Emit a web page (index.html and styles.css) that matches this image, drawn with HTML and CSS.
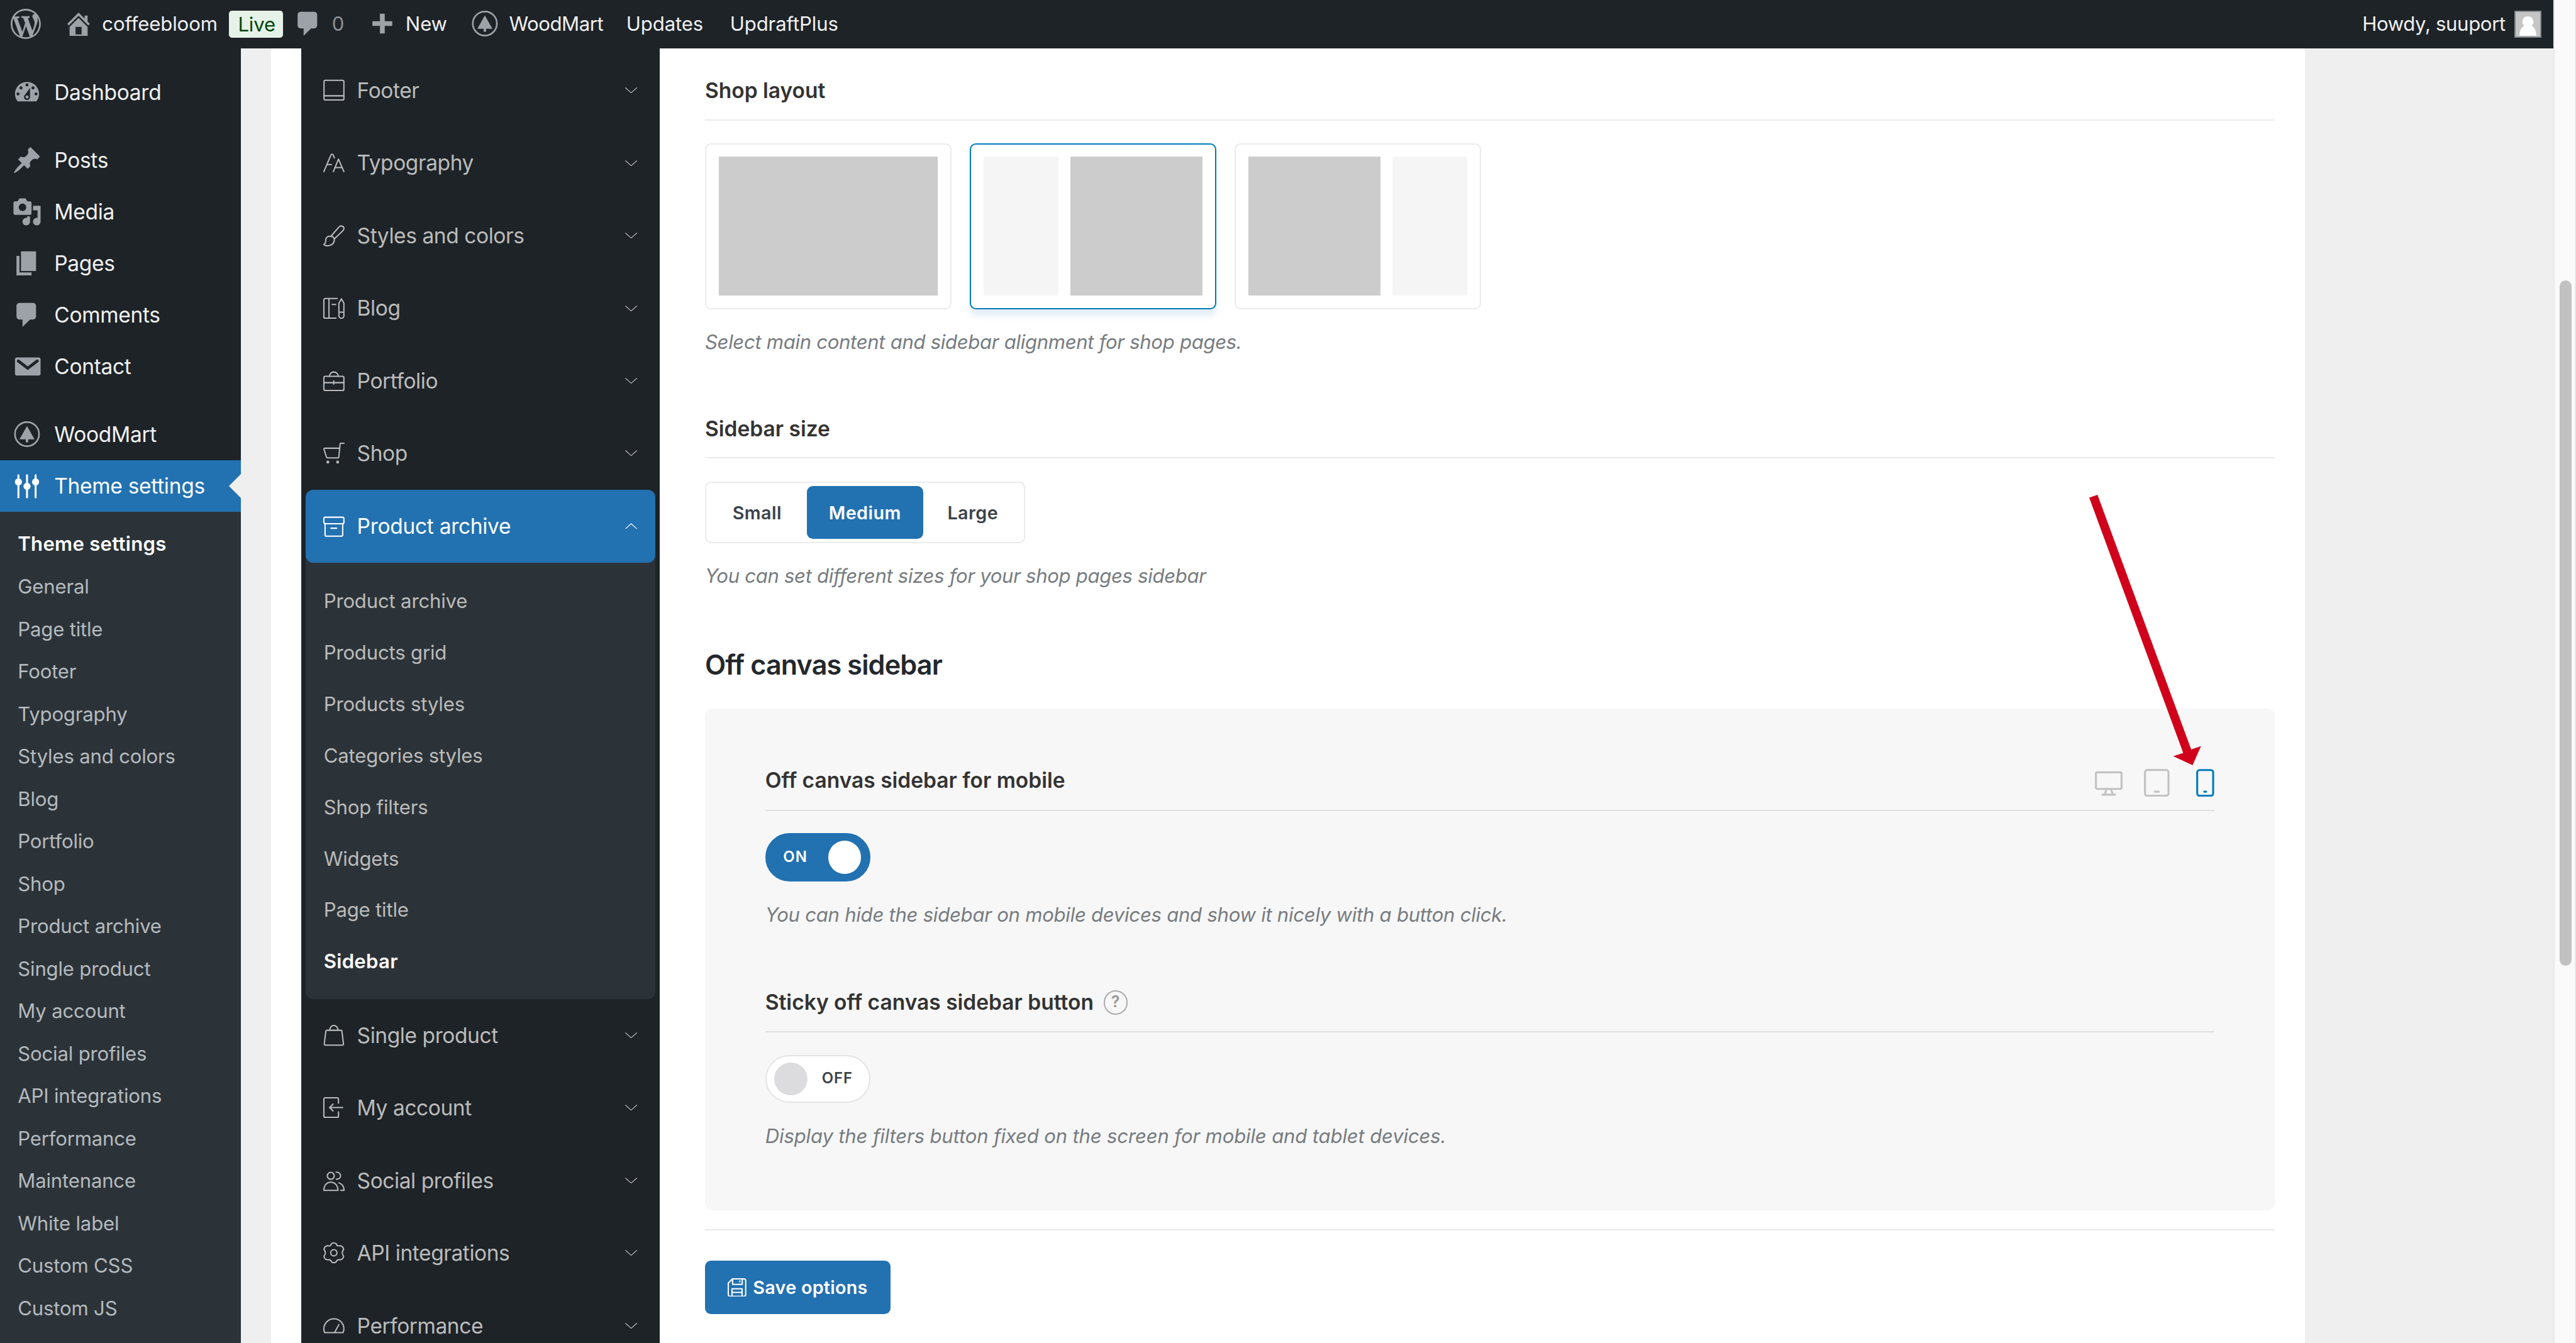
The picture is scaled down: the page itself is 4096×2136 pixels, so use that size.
FILE: index.html
```html
<!DOCTYPE html>
<html lang="en">
<head>
<meta charset="utf-8">
<title>Theme settings ‹ coffeebloom — WordPress</title>
<link rel="stylesheet" href="styles.css">
</head>
<body>
<svg class="defs" aria-hidden="true">
  <symbol id="chevron" viewBox="0 0 8 4"><path d="M.3.3 4 3.6 7.7.3"/></symbol>
  <symbol id="tree" viewBox="0 0 20 20"><circle cx="10" cy="9.8" r="8" fill="none" stroke="currentColor" stroke-width="1.1"/><path d="M10 4.4 15 13.3h-4.2v1.9H9.2v-1.9H5z"/></symbol>
  <symbol id="comment" viewBox="0 0 20 20"><path d="M5 2h9c1.1 0 2 .9 2 2v7c0 1.1-.9 2-2 2h-2l-5 5v-5H5c-1.1 0-2-.9-2-2V4c0-1.1.9-2 2-2z"/></symbol>
</svg>

<div class="window">
  <div class="page">
    <header class="adminbar">
      <a class="bar-logo"><svg class="dash" viewBox="0 0 20 20"><path d="M20 10c0-5.51-4.49-10-10-10C4.48 0 0 4.49 0 10c0 5.52 4.48 10 10 10 5.51 0 10-4.48 10-10zM7.78 15.37L4.37 6.22c.55-.02 1.17-.08 1.17-.08.5-.06.44-1.13-.06-1.11 0 0-1.45.11-2.37.11-.18 0-.37 0-.58-.01C4.12 2.69 6.87 1.11 10 1.11c2.33 0 4.45.87 6.05 2.34-.68-.11-1.65.39-1.65 1.58 0 .74.45 1.36.9 2.1.35.61.55 1.36.55 2.46 0 1.49-1.4 5-1.4 5l-3.03-8.37c.54-.02.82-.17.82-.17.5-.05.44-1.25-.06-1.22 0 0-1.44.12-2.38.12-.87 0-2.33-.12-2.33-.12-.5-.03-.56 1.2-.06 1.22l.92.08 1.26 3.41zM17.41 10c.24-.64.74-1.87.43-4.25.7 1.29 1.05 2.71 1.05 4.25 0 3.29-1.73 6.24-4.4 7.78.97-2.59 1.94-5.2 2.92-7.78zM6.1 18.09C3.12 16.65 1.11 13.53 1.11 10c0-1.3.23-2.48.72-3.59C3.25 10.3 4.67 14.2 6.1 18.09zm4.03-6.63l2.58 6.98c-.86.29-1.76.45-2.71.45-.79 0-1.57-.11-2.29-.33.81-2.38 1.62-4.74 2.42-7.1z"/></svg></a>
      <a class="bar-site"><svg class="dash" viewBox="0 0 20 20"><path d="M16 8.5l1.53 1.53-1.06 1.06L10 4.6l-6.47 6.49-1.06-1.06L10 2.5l4 4v-2h2v4zm-6-2.46l6 5.99V18H4v-5.97zM12 17v-5H8v5h4z"/></svg><span>coffeebloom</span><b class="badge">Live</b></a>
      <a class="bar-comments"><svg class="dash"><use href="#comment"/></svg><span>0</span></a>
      <a class="bar-new"><svg class="dash" viewBox="0 0 20 20"><path d="M16.6 8.2v3.2h-5v5H8.4v-5h-5V8.2h5v-5h3.2v5z"/></svg><span>New</span></a>
      <a class="bar-wood"><svg class="dash"><use href="#tree"/></svg><span>WoodMart</span></a>
      <a class="bar-updates">Updates</a>
      <a class="bar-updraft">UpdraftPlus</a>
      <a class="bar-user"><span>Howdy, suuport</span><svg class="avatar" viewBox="0 0 16 16"><path fill="#c5c5c5" d="M0 0h16v16H0z"/><path fill="#fff" d="M8 3a3.3 3.3 0 0 1 2.300 5.900c2 1 3 3.200 3.200 6.500h-11c.2-3.300 1.200-5.500 3.200-6.500A3.300 3.300 0 0 1 8 3z"/></svg></a>
    </header>

    <div class="columns">
      <nav class="adminmenu">
        <a class="item"><svg class="dash" viewBox="0 0 20 20"><path d="M3.76 16h12.480c1.100-1.370 1.760-3.110 1.760-5 0-4.420-3.580-8-8-8s-8 3.580-8 8c0 1.890.66 3.630 1.760 5zM10 4c.55 0 1 .45 1 1s-.45 1-1 1-1-.45-1-1 .45-1 1-1zM6 6c.55 0 1 .45 1 1s-.45 1-1 1-1-.45-1-1 .45-1 1-1zm8 0c.55 0 1 .45 1 1s-.45 1-1 1-1-.45-1-1 .45-1 1-1zm-5.370 5.550L12 7v6c0 1.100-.9 2-2 2s-2-.9-2-2c0-.57.24-1.080.63-1.450zM4 10c.55 0 1 .45 1 1s-.45 1-1 1-1-.45-1-1 .45-1 1-1zm12 0c.55 0 1 .45 1 1s-.45 1-1 1-1-.45-1-1 .45-1 1-1zm-5 3c0-.55-.45-1-1-1s-1 .45-1 1 .45 1 1 1 1-.45 1-1z"/></svg>Dashboard</a>
        <a class="item gap-above"><svg class="dash" viewBox="0 0 20 20"><path d="M10.440 3.020l1.820-1.820 6.360 6.350-1.830 1.820c-1.050-.68-2.480-.57-3.410.36l-.75.75c-.92.93-1.040 2.350-.35 3.410l-1.830 1.820-2.410-2.410-2.800 2.790c-.42.42-3.380 2.710-3.800 2.290s1.860-3.390 2.280-3.810l2.790-2.790L4.100 9.360l1.830-1.820c1.050.69 2.480.57 3.400-.36l.75-.75c.93-.92 1.050-2.350.36-3.410z"/></svg>Posts</a>
        <a class="item"><svg class="dash" viewBox="0 0 20 20"><path d="M13 11V4c0-.55-.45-1-1-1h-1.670L9 1H5L3.670 3H2c-.55 0-1 .45-1 1v7c0 .55.45 1 1 1h10c.55 0 1-.45 1-1zM7 4.500c1.380 0 2.500 1.120 2.500 2.500S8.380 9.500 7 9.500 4.500 8.380 4.500 7 5.620 4.500 7 4.500zM14 6h5v10.500c0 1.380-1.120 2.500-2.500 2.500S14 17.880 14 16.500s1.120-2.500 2.500-2.500c.17 0 .34.02.5.05V9h-3V6zm-4 8.050V13h2v3.500c0 1.380-1.120 2.500-2.500 2.500S7 17.880 7 16.500 8.120 14 9.500 14c.17 0 .34.02.5.05z"/></svg>Media</a>
        <a class="item"><svg class="dash" viewBox="0 0 20 20"><path d="M6 15V2h10v13H6zm-1 1h8v2H3V5h2v11z"/></svg>Pages</a>
        <a class="item"><svg class="dash"><use href="#comment"/></svg>Comments</a>
        <a class="item"><svg class="dash" viewBox="0 0 20 20"><rect x="2" y="4" width="17" height="12" rx="1.400"/><path d="M4.200 6.300 10.500 11.100l6.300-4.800" fill="none" stroke="#1d2327" stroke-width="1.900" stroke-linecap="round"/></svg>Contact</a>
        <a class="item gap-above"><svg class="dash"><use href="#tree"/></svg>WoodMart</a>
        <a class="item current"><svg class="dash" viewBox="0 0 20 20"><path d="M4.300 2.800v14.700M10 2.800v14.700M15.700 2.800v14.700" fill="none" stroke="currentColor" stroke-width="1.300" stroke-linecap="round"/><circle cx="4.300" cy="7.300" r="2.350"/><circle cx="10" cy="10.200" r="2.350"/><circle cx="15.700" cy="7.300" r="2.350"/></svg>Theme settings</a>
        <div class="submenu">
          <a class="active">Theme settings</a><a>General</a><a>Page title</a><a>Footer</a><a>Typography</a><a>Styles and colors</a><a>Blog</a><a>Portfolio</a><a>Shop</a><a>Product archive</a><a>Single product</a><a>My account</a><a>Social profiles</a><a>API integrations</a><a>Performance</a><a>Maintenance</a><a>White label</a><a>Custom CSS</a><a>Custom JS</a><a>Other</a>
        </div>
      </nav>

      <div class="settings">
        <nav class="sections">
          <a class="section"><svg class="ico" viewBox="0 0 14 14"><rect x=".5" y=".3" width="13.200" height="13.100" rx=".9"/><path d="M.5 10.600h13.200"/></svg><span>Footer</span><svg class="chev"><use href="#chevron"/></svg></a>
          <a class="section"><svg class="ico" viewBox="0 0 14 14"><path d="M.4 12.500 5 1.700C5.400.7 6.300.7 6.700 1.700l.7 1.700M2.900 7.800h2.500M6.700 12.500l3.400-8.300 3.600 8.300M7.900 9.800h4.500"/></svg><span>Typography</span><svg class="chev"><use href="#chevron"/></svg></a>
          <a class="section"><svg class="ico" viewBox="0 0 14 14"><path d="M5 7.500 10.500 1.200C11.600 0 14 .7 13.700 2.500c-.1.500-.3.900-.8 1.300L7.300 9.300M5 7.500C2.900 7.100 1.700 8.300 1.700 9.800c0 1.600-.3 2.500-1.300 3.100 1.600 1.500 7.300 1.100 6.900-3.600C7.100 8.300 6.200 7.500 5 7.500z"/></svg><span>Styles and colors</span><svg class="chev"><use href="#chevron"/></svg></a>
          <a class="section"><svg class="ico" viewBox="0 0 14 14"><path d="M9.300.3H1.300a.9.900 0 0 0-.9.900v11.300a.9.900 0 0 0 .9.900h7.200M3.800.3v13.100M5.900 4.300h2.400M12.100.5 10.400 3.400v8.400a1.650 1.650 0 0 0 3.300 0V3.400zM10.400 9.400h3.300"/></svg><span>Blog</span><svg class="chev"><use href="#chevron"/></svg></a>
          <a class="section"><svg class="ico" viewBox="0 0 14 14"><rect x=".4" y="4" width="13.300" height="9.400" rx=".9"/><path d="M.4 8.200h13.300M7 7v2.200M4 4C4.300 2.300 5.500 1.100 7 1.100S9.800 2.300 10.100 4"/></svg><span>Portfolio</span><svg class="chev"><use href="#chevron"/></svg></a>
          <a class="section"><svg class="ico" viewBox="0 0 14 14"><path d="M13.800.4h-2.100a.5.500 0 0 0-.5.500l-.9 8.700a.6.600 0 0 1-.6.500H2.800a.8.800 0 0 1-.7-.6L.5 4.500a.6.600 0 0 1 .6-.8H10.900"/><g fill="currentColor" stroke="none"><circle cx="3.050" cy="12.900" r=".95"/><circle cx="9.550" cy="12.900" r=".95"/></g></svg><span>Shop</span><svg class="chev"><use href="#chevron"/></svg></a>
          <div class="group">
            <a class="section open"><svg class="ico" viewBox="0 0 14 14"><rect x=".4" y="1.100" width="13.300" height="4.300" rx=".9"/><path d="M1.200 5.400v7.300a1 1 0 0 0 1 1h9.700a1 1 0 0 0 1-1V5.400M5.100 8.400h3.800"/></svg><span>Product archive</span><svg class="chev up"><use href="#chevron"/></svg></a>
            <div class="children"><a>Product archive</a><a>Products grid</a><a>Products styles</a><a>Categories styles</a><a>Shop filters</a><a>Widgets</a><a>Page title</a><a class="active">Sidebar</a></div>
          </div>
          <a class="section"><svg class="ico" viewBox="0 0 14 14"><path d="M2.500 3.600h9.100a.8.800 0 0 1 .8.600l1 8.400a.7.700 0 0 1-.7.900H1.400a.7.700 0 0 1-.7-.9l1-8.400a.8.800 0 0 1 .8-.6zM4.300 3.600C4.500 1.500 5.500.4 7 .4s2.600 1.100 2.800 3.200"/></svg><span>Single product</span><svg class="chev"><use href="#chevron"/></svg></a>
          <a class="section"><svg class="ico" viewBox="0 0 14 14"><path d="M10.100 4V1.300a.9.900 0 0 0-.9-.9H1.300a.9.900 0 0 0-.9.900v11.200a.9.900 0 0 0 .9.900h7.900a.9.900 0 0 0 .9-.9V9.800M12.900 6.900H4.200M6.500 4.600 4.200 6.900l2.300 2.300"/></svg><span>My account</span><svg class="chev"><use href="#chevron"/></svg></a>
          <a class="section"><svg class="ico" viewBox="0 0 14 14"><circle cx="5" cy="3.800" r="2.300"/><path d="M8.500 1.400c4-.1 4 4.700.2 4.700M.4 13.500c0-3.200 1.800-5.500 4.600-5.500s4.700 2.300 4.800 5.500zM10.400 8.500c2.200.7 3.400 2.600 3.400 5h-2.200"/></svg><span>Social profiles</span><svg class="chev"><use href="#chevron"/></svg></a>
          <a class="section"><svg class="ico" viewBox="0 0 14 14"><circle cx="7" cy="6.900" r="2.100"/><path d="M5.400.9Q7-.3 8.600.9Q9 2.700 11.500 2.200Q13.400 2.900 13.500 4.700Q11.700 6.900 13.500 9.100Q13.400 10.900 11.500 11.600Q9 11.100 8.600 12.900Q7 14.100 5.400 12.900Q5 11.100 2.500 11.600Q.6 10.900.5 9.100Q2.300 6.900.5 4.700Q.6 2.900 2.500 2.200Q5 2.700 5.400.9z"/></svg><span>API integrations</span><svg class="chev"><use href="#chevron"/></svg></a>
          <a class="section"><svg class="ico" viewBox="0 0 14 14"><path d="M1 11.500C.6 10.700.4 9.800.4 9c0-3.700 3-6.700 6.700-6.700s6.600 3 6.600 6.700c0 .8-.2 1.700-.6 2.500zM10.400 6.100 7.600 11.300"/></svg><span>Performance</span><svg class="chev"><use href="#chevron"/></svg></a>
        </nav>

        <main class="content">
          <section class="field">
            <h4>Shop layout</h4>
            <div class="layouts">
              <div class="layout"><i class="dark"></i></div>
              <div class="layout chosen"><i class="light"></i><i class="dark"></i></div>
              <div class="layout"><i class="dark"></i><i class="light"></i></div>
            </div>
            <p class="desc">Select main content and sidebar alignment for shop pages.</p>
          </section>
          <section class="field size-field">
            <h4>Sidebar size</h4>
            <div class="buttons"><span>Small</span><span class="on">Medium</span><span>Large</span></div>
            <p class="desc">You can set different sizes for your shop pages sidebar</p>
          </section>
          <h3>Off canvas sidebar</h3>
          <div class="panel">
            <section class="field">
              <h4>Off canvas sidebar for mobile
                <span class="devices">
                  <svg class="monitor" viewBox="0 0 18.400 17"><rect x=".7" y="1" width="17" height="11" rx=".8"/><path d="M7.700 12 6.600 15.500M10.700 12l1.100 3.500M5 15.800h8.400"/></svg>
                  <svg class="tablet" viewBox="0 0 17 18.500"><rect x=".7" y=".7" width="15.600" height="17.100" rx="1.500"/><path d="M7.200 15.100h2.600"/></svg>
                  <svg class="phone" viewBox="0 0 12 18.500"><rect x=".7" y=".7" width="10.600" height="17.100" rx="1.500"/><path d="M5.400 15.100h1.200"/></svg>
                </span>
              </h4>
              <div class="toggle is-on"><span>ON</span><i></i></div>
              <p class="desc">You can hide the sidebar on mobile devices and show it nicely with a button click.</p>
            </section>
            <section class="field sticky-field">
              <h4>Sticky off canvas sidebar button<em class="help">?</em></h4>
              <div class="toggle"><i></i><span>OFF</span></div>
              <p class="desc">Display the filters button fixed on the screen for mobile and tablet devices.</p>
            </section>
          </div>
          <footer class="actions">
            <button class="save"><svg viewBox="0 0 12.400 12.400"><path d="M3.200.4h7.600a1.200 1.200 0 0 1 1.200 1.200v9.200a1.200 1.200 0 0 1-1.200 1.200H1.600a1.200 1.200 0 0 1-1.200-1.200V3.200zM3.300.4v3.700h6.400V.4M8.100 1.500v1.200M2.900 12V7h6.700v5M2.900 9.400h6.700"/></svg>Save options</button>
          </footer>
          <svg class="pointer" viewBox="0 0 74.200 179.500"><path d="M0 1.900 5.500 0 67.700 169.100l6.500-2.200-5.600 12.600-12.800-5.900 6.600-2.200z"/></svg>
        </main>
      </div>
    </div>
  </div>
  <div class="scrollbar"><div class="thumb"></div></div>
</div>
</body>
</html>
```
FILE: styles.css
```css
/* 1rem = 10 layout units; the layout is 1710 units wide */
html { font-size: 23.953px; }
* { box-sizing: border-box; }
body { margin: 0; font-family: Inter, "Liberation Sans", sans-serif; font-size: 1.3rem; background: #efefef; overflow: hidden; }
a { color: inherit; text-decoration: none; }
h3, h4, p { margin: 0; }
.defs { position: absolute; width: 0; height: 0; }
.dash { width: 2rem; height: 2rem; fill: currentColor; flex: none; display: block; }

.window { display: flex; width: 4096px; height: 2136px; overflow: hidden; }
.page { width: 169.51rem; height: 100%; display: flex; flex-direction: column; overflow: hidden; flex: none; }

/* Admin bar */
.adminbar { height: 3.2rem; flex: none; background: #1d2327; color: #f0f0f1; display: flex; align-items: center; padding: 0 0.79rem 0 0.7rem; letter-spacing: -0.004em; }
.adminbar a { display: flex; align-items: center; height: 100%; line-height: 3.3rem; }
.adminbar .dash { color: #9ca2a7; }
.bar-site { margin-left: 1.5rem; }
.bar-site > span { margin-left: 0.58rem; width: 8.42rem; }
.adminbar .badge { height: 1.82rem; padding: 0 0.6rem; width: 3.57rem; border-radius: 0.2rem; background: #e6f2e8; color: #00450c; font-weight: 400; line-height: 1.9rem; }
.bar-comments { margin-left: 0.69rem; }
.bar-comments > span { margin-left: 0.58rem; color: #8c9196; }
.bar-new { margin-left: 1.55rem; }
.bar-new > span { margin-left: 0.52rem; }
.bar-wood { margin-left: 1.49rem; }
.bar-wood > span { margin-left: 0.62rem; letter-spacing: -0.014em; }
.bar-updates { margin-left: 1.52rem; }
.bar-updraft { margin-left: 1.78rem; }
.bar-user { margin-left: auto; gap: 0.6rem; letter-spacing: -0.011em; }
.avatar { width: 1.8rem; height: 1.8rem; border: 0.1rem solid #82878c; display: block; }

.columns { display: flex; flex: 1; min-height: 0; }

/* Left admin menu */
.adminmenu { width: 16rem; flex: none; background: #1d2327; padding-top: 1.22rem; color: #f0f0f1; overflow: hidden; }
.item { display: flex; align-items: center; height: 3.42rem; padding-left: 0.8rem; gap: 0.8rem; font-size: 1.4rem; letter-spacing: -0.009em; }
.item .dash { color: #9ca2a7; }
.gap-above { margin-top: 1.11rem; }
.item.current { background: #2271b1; color: #fff; position: relative; }
.current .dash { color: #fff; }
.current::after { content: ""; position: absolute; right: 0; top: 0.91rem; border: 0.8rem solid transparent; border-right-color: #efefef; border-left: 0; }
.submenu { background: #2c3338; padding-top: 0.76rem; height: 60rem; letter-spacing: -0.006em; color: #b4babf; }
.submenu a { display: block; padding: 0.5rem 1.18rem; line-height: 1.82rem; }
.submenu .active { color: #fff; font-weight: 600; letter-spacing: 0.009em; }

/* Settings card */
.settings { width: 135rem; height: 100%; margin-left: 2rem; padding-left: 2rem; background: #fff; display: flex; overflow: hidden; flex: none; }
.sections { width: 23.8rem; flex: none; background: #1d2327; padding: 0.4rem 0.3rem 0; color: #bbb; }
.section { display: flex; align-items: center; height: 4.82rem; padding: 0 1.2rem 0 1.18rem; font-size: 1.4rem; letter-spacing: -0.013em; }
.ico { width: 1.4rem; height: 1.4rem; margin: 0 0.82rem 0 0; overflow: visible; fill: none; stroke: currentColor; stroke-width: .85; stroke-linecap: round; stroke-linejoin: round; display: block; }
.chev { width: 0.8rem; height: 0.4rem; margin-left: auto; fill: none; stroke: currentColor; stroke-width: .5; stroke-linecap: round; stroke-linejoin: round; display: block; }
.up { transform: rotate(180deg); }
.group { background: #2c3338; border-radius: 0.5rem; }
.open { height: 4.86rem; background: #2271b1; color: #fff; border-radius: 0.5rem; letter-spacing: -0.009em; }
.children { padding: 0.86rem 1.19rem 0.74rem; letter-spacing: -0.006em; }
.children a { display: block; line-height: 3.42rem; }
.children .active { color: #fff; font-weight: 600; letter-spacing: 0.009em; }

/* Main form */
.content { position: relative; flex: 1; padding: 0 2.01rem 0 3rem; color: #333; }
h4 { display: flex; align-items: center; height: 4.8rem; font-size: 1.4rem; font-weight: 600; line-height: 1.8rem; border-bottom: 0.1rem solid #ebebeb; }
.content > .field > h4 { padding-top: 0.94rem; }
.desc { font-style: italic; color: #777c80; line-height: 1.8rem; letter-spacing: -0.0105em; white-space: nowrap; }

.layouts { display: flex; gap: 1.2rem; margin-top: 1.5rem; }
.layout { width: 16.37rem; height: 11.04rem; border: 0.1rem solid #ebebeb; border-radius: 0.4rem; padding: 0.83rem; display: flex; gap: 0.8rem; }
.chosen { border-color: #007cba; box-shadow: 0 0.45rem 0.45rem -0.05rem rgba(34, 113, 177, 0.13); }
.layout i { background: #ccc; flex: 1; }
.layout .light { background: #f5f5f5; flex: 0 0 4.97rem; }
.layouts + .desc { margin-top: 1.3rem; }

.size-field { margin-top: 2.01rem; }
.buttons { display: inline-flex; gap: 0.12rem; margin-top: 1.53rem; height: 4.08rem; border: 0.1rem solid #ebebeb; border-radius: 0.4rem; padding: 0.19rem; vertical-align: top; }
.buttons span { display: flex; align-items: center; justify-content: center; width: 6.37rem; padding-top: 0.06rem; font-size: 1.2rem; font-weight: 600; letter-spacing: 0.015em; color: #3c434a; border-radius: 0.4rem; }
.buttons .on { width: 7.71rem; background: #2271b1; color: #fff; }
.buttons + .desc { margin-top: 1.29rem; }

h3 { margin-top: 3.8rem; font-size: 1.8rem; line-height: 2.4rem; font-weight: 600; letter-spacing: -0.02em; color: #23282d; }

.panel { margin-top: 1.69rem; height: 33.35rem; padding: 2.4rem 4rem 0; border-radius: 0.5rem; background: #f7f7f7; }
.panel h4 { border-color: #e0e0e0; height: 4.4rem; padding-top: 0.52rem; }
.devices { margin: 0.24rem 0 0 auto; display: flex; align-items: flex-start; height: 1.85rem; color: #c2c2c2; }
.devices svg { height: 1.85rem; fill: none; stroke: currentColor; stroke-width: 1.3; stroke-linecap: round; stroke-linejoin: round; display: block; }
.devices .monitor { width: 1.84rem; height: 1.7rem; margin: 0.15rem 1.43rem 0 0; }
.devices .tablet { width: 1.7rem; margin-right: 1.76rem; }
.devices .phone { width: 1.2rem; color: #007cba; }

.toggle { margin-top: 1.5rem; width: 6.98rem; height: 3.2rem; border-radius: 1.6rem; border: 0.1rem solid #e4e4e6; background: #fff; display: flex; align-items: center; padding: 0 0.52rem; font-size: 1rem; font-weight: 600; color: #3c434a; letter-spacing: 0.04em; }
.toggle i { width: 2.2rem; height: 2.2rem; border-radius: 50%; background: #dcdcde; }
.toggle span { margin-left: 0.95rem; margin-top: -0.14rem; }
.is-on { background: #2271b1; border-color: #2271b1; color: #fff; }
.is-on span { margin-left: 0.59rem; }
.is-on i { background: #fff; margin-left: auto; }
.toggle + .desc { margin-top: 1.33rem; letter-spacing: -0.0088em; }
.sticky-field { margin-top: 2.48rem; }
.sticky-field .toggle + .desc { letter-spacing: -0.0054em; }
.help { margin-left: 0.65rem; width: 1.6rem; height: 1.6rem; border: 0.11rem solid #aaa; border-radius: 50%; font: 600 1.05rem/1.4rem Inter, sans-serif; text-align: center; color: #999; }

.actions { margin-top: 1.25rem; border-top: 0.1rem solid #ebebeb; padding-top: 2rem; }
.save { width: 12.32rem; height: 3.52rem; border: 0; border-radius: 0.4rem; padding: 0 1.5rem; background: #2271b1; color: #fff; display: flex; align-items: center; gap: 0.45rem; font: 600 1.2rem Inter, sans-serif; letter-spacing: 0.009em; white-space: nowrap; }
.save svg { width: 1.24rem; height: 1.24rem; fill: none; stroke: currentColor; stroke-width: .85; stroke-linejoin: round; flex: none; }

.pointer { position: absolute; left: 94.89rem; top: 29.64rem; width: 7.42rem; height: 17.95rem; fill: #d0021b; }

/* Window scrollbar */
.scrollbar { flex: 1; border-left: 0.09rem solid #e8e8e8; border-right: 0.1rem solid #e8e8e8; background: #fafafa; padding: 18.64rem 0 0 0.31rem; }
.thumb { width: 0.8rem; height: 45.5rem; border-radius: 0.4rem; background: #c1c1c1; }
```
